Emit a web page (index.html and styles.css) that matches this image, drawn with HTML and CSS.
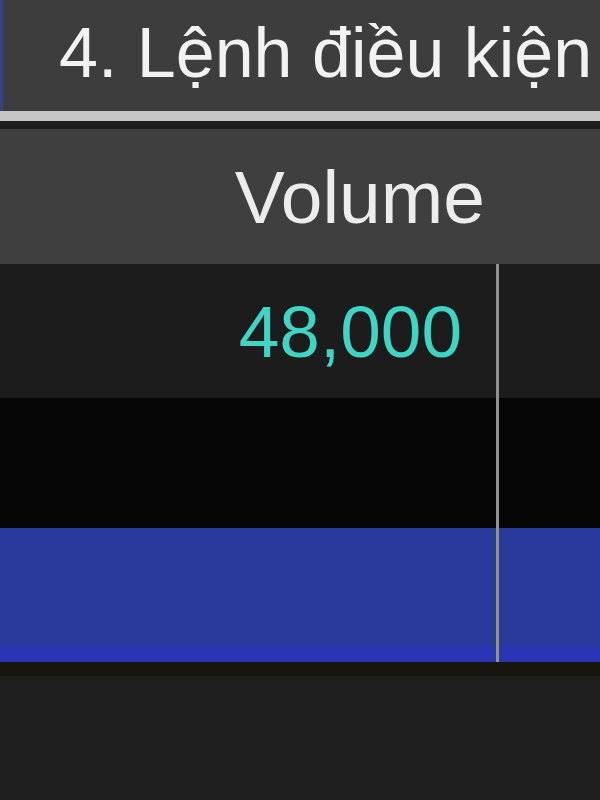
FILE: index.html
```html
<!DOCTYPE html>
<html lang="vi">
<head>
    <meta charset="UTF-8">
    <meta name="viewport" content="width=device-width, initial-scale=1.0">
    <title>Lệnh điều kiện</title>
    <link rel="stylesheet" href="styles.css">
</head>
<body>
    <div class="title">4. Lệnh điều kiện</div>
    <div class="rule"></div>

    <div class="table">
        <div class="row head">
            <div class="cell vol">Volume</div>
        </div>
        <div class="row r1">
            <div class="cell vol num">48,000</div>
            <div class="cell rest"></div>
        </div>
        <div class="row r2">
            <div class="cell vol"></div>
            <div class="cell rest"></div>
        </div>
        <div class="row r3 selected">
            <div class="cell vol"></div>
            <div class="cell rest"></div>
        </div>
    </div>

    <div class="footer"></div>
</body>
</html>
```

FILE: styles.css
```css
* {
    margin: 0;
    padding: 0;
    box-sizing: border-box;
    font-family: "Liberation Sans", Arial, sans-serif;
}

body {
    width: 600px;
    height: 800px;
    overflow: hidden;
    background: #1f1f1f;
    display: flex;
    flex-direction: column;
}

.title {
    height: 111px;
    display: flex;
    align-items: center;
    padding: 0 0 6px 56px;
    border-left: 3px solid #36437e;
    background: #3d3d3d;
    color: #f2f2f2;
    font-size: 70px;
    white-space: nowrap;
    overflow: hidden;
}

.rule {
    height: 18px;
    border-top: 10px solid #c6c6c6;
    background: #1d1d1d;
}

.table {
    display: flex;
    flex-direction: column;
}

.row {
    display: flex;
    height: 134px;
}

.cell {
    display: flex;
    align-items: center;
    justify-content: flex-end;
    font-size: 75px;
    white-space: nowrap;
}

.cell.vol {
    width: 496px;
}

.cell.rest {
    flex: 1;
    border-left: 3px solid #929292;
}

.head {
    height: 135px;
    background: #3f3f3f;
}

.head .cell {
    padding-right: 11px;
    color: #ececec;
}

.r1 {
    background: #1c1c1c;
}

.num {
    padding-right: 34px;
    color: #40d4c4;
    font-size: 73px;
}

.r2 {
    height: 130px;
    background: #050505;
}

/* selected row: a brighter band along the bottom edge */
.r3 {
    height: 134px;
    background: linear-gradient(to bottom, #283b9c 0, #283b9c 118px, #2a35b6 118px);
}

.footer {
    flex: 1;
    border-top: 14px solid #17160e;
    background: #1f1f1f;
}
```
